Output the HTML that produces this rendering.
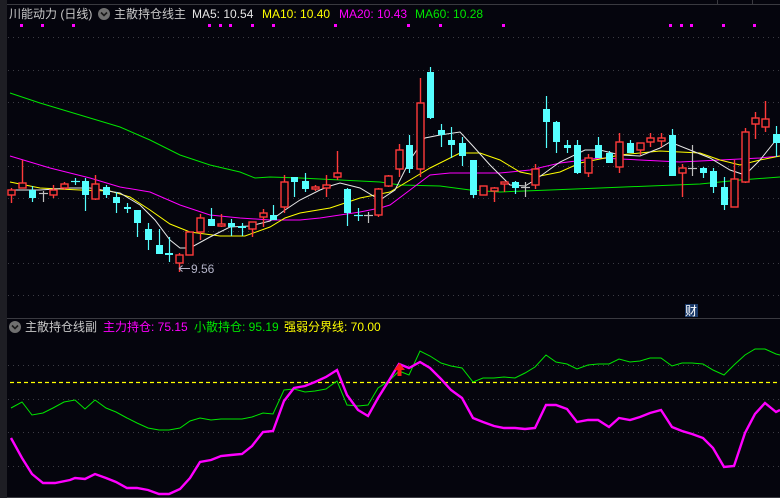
<!DOCTYPE html>
<html><head><meta charset="utf-8"><style>
html,body{margin:0;padding:0;background:#05050d;width:780px;height:498px;overflow:hidden}
svg{display:block}
text{font-family:"Liberation Sans","Noto Sans CJK SC",sans-serif;font-size:12px}
</style></head><body>
<svg width="780" height="498" viewBox="0 0 780 498" xmlns="http://www.w3.org/2000/svg">
<rect width="780" height="498" fill="#05050d"/>
<rect x="0" y="0" width="7" height="498" fill="#1e1e24"/>
<line x1="7" y1="4.5" x2="780" y2="4.5" stroke="#3a3a40"/>
<line x1="717.5" y1="0" x2="717.5" y2="4" stroke="#3a3a40"/>
<line x1="752.5" y1="0" x2="752.5" y2="4" stroke="#3a3a40"/>
<g stroke="#3c3c44" stroke-dasharray="1,4">
<line x1="8" y1="37.5" x2="780" y2="37.5"/>
<line x1="8" y1="70.5" x2="780" y2="70.5"/>
<line x1="8" y1="102.5" x2="780" y2="102.5"/>
<line x1="8" y1="134.5" x2="780" y2="134.5"/>
<line x1="8" y1="166.5" x2="780" y2="166.5"/>
<line x1="8" y1="198.5" x2="780" y2="198.5"/>
<line x1="8" y1="231.5" x2="780" y2="231.5"/>
<line x1="8" y1="263.5" x2="780" y2="263.5"/>
<line x1="8" y1="295.5" x2="780" y2="295.5"/>
<line x1="8" y1="365.5" x2="780" y2="365.5"/>
<line x1="8" y1="399.5" x2="780" y2="399.5"/>
<line x1="8" y1="432.5" x2="780" y2="432.5"/>
<line x1="8" y1="466.5" x2="780" y2="466.5"/>
</g>
<line x1="7" y1="318.5" x2="780" y2="318.5" stroke="#3a3a40"/>
<line x1="7" y1="497.5" x2="780" y2="497.5" stroke="#3a3a40"/>

<text x="9" y="18" fill="#c8c8c8">川能动力 (日线)</text>
<circle cx="104" cy="14" r="6" fill="#707070"/><path d="M101 12.5 L104 15.5 L107 12.5" stroke="#1a1a1a" stroke-width="1.6" fill="none"/>
<text x="114" y="18" fill="#c8c8c8">主散持仓线主</text>
<text x="192" y="18" fill="#e6e6e6">MA5: 10.54</text>
<text x="262" y="18" fill="#ffff00">MA10: 10.40</text>
<text x="339" y="18" fill="#ff00ff">MA20: 10.43</text>
<text x="415" y="18" fill="#00e600">MA60: 10.28</text>
<g fill="#ff00ff">
<rect x="20" y="24" width="3" height="3"/><rect x="41" y="24" width="3" height="3"/><rect x="72" y="24" width="3" height="3"/><rect x="208" y="24" width="3" height="3"/><rect x="219" y="24" width="3" height="3"/><rect x="229" y="24" width="3" height="3"/><rect x="251" y="24" width="3" height="3"/><rect x="272" y="24" width="3" height="3"/><rect x="334" y="24" width="3" height="3"/><rect x="407" y="24" width="3" height="3"/><rect x="439" y="24" width="3" height="3"/><rect x="502" y="24" width="3" height="3"/><rect x="669" y="24" width="3" height="3"/><rect x="680" y="24" width="3" height="3"/><rect x="690" y="24" width="3" height="3"/><rect x="722" y="24" width="3" height="3"/><rect x="753" y="24" width="3" height="3"/>
</g>

<polyline fill="none" stroke="#00e600" points="10,93 40,103 80,115 120,127 150,140 180,155 210,165 240,172 255,178 270,177 300,178 340,180 380,182 400,185 440,186 470,190 500,192 550,190 600,188 650,186 700,184 720,182 740,180 780,177"/>
<polyline fill="none" stroke="#ff00ff" points="10,156 50,168 90,178 120,187 150,192 180,205 210,215 240,218 270,220 300,220 320,218 340,215 360,212 380,208 390,205 410,190 430,175 450,173 470,173 500,173 530,170 560,163 600,158 640,160 680,162 720,160 760,158 780,156"/>
<polyline fill="none" stroke="#ffff00" points="10,182 40,188 80,190 110,191 130,197 150,210 170,224 190,232 220,236 245,236 270,227 285,218 300,213 330,208 360,198 390,192 410,180 430,168 460,153 480,153 500,160 520,172 540,176 560,172 580,163 620,155 660,151 700,153 720,160 740,165 760,160 780,156"/>
<polyline fill="none" stroke="#e8e8e8" points="10,190 40,190 70,188 90,188 120,193 140,205 155,220 170,240 180,248 190,248 210,237 230,227 250,226 270,221 285,210 300,200 320,190 330,186 340,183 360,188 380,200 395,190 410,160 425,138 440,135 460,132 472,145 490,165 510,185 525,186 535,180 560,162 585,150 600,150 620,155 640,156 660,148 670,142 690,150 710,158 730,170 745,175 760,160 780,135"/>

<g stroke="#ff3a3a" fill="none" stroke-width="1.4">
<line x1="11.5" y1="188" x2="11.5" y2="203"/><rect x="8" y="190" width="7" height="5" fill="#05050d"/>
<line x1="22.5" y1="160" x2="22.5" y2="188"/><rect x="19" y="183" width="7" height="5" fill="#05050d"/>
<line x1="53.5" y1="185" x2="53.5" y2="198"/><rect x="50" y="190" width="7" height="5" fill="#05050d"/>
<line x1="64.5" y1="182" x2="64.5" y2="190"/><rect x="61" y="184" width="7" height="4" fill="#05050d"/>
<line x1="95.5" y1="175" x2="95.5" y2="200"/><rect x="92" y="184" width="7" height="15" fill="#05050d"/>
<line x1="179.5" y1="253" x2="179.5" y2="272"/><rect x="176" y="255" width="7" height="8" fill="#05050d"/>
<rect x="186" y="232" width="7" height="23" fill="#05050d"/>
<line x1="200.5" y1="214" x2="200.5" y2="240"/><rect x="197" y="218" width="7" height="14" fill="#05050d"/>
<line x1="221.5" y1="214" x2="221.5" y2="227"/><rect x="218" y="224" width="7" height="2" fill="#05050d"/>
<line x1="252.5" y1="222" x2="252.5" y2="237"/><rect x="249" y="222" width="7" height="7" fill="#05050d"/>
<line x1="263.5" y1="209" x2="263.5" y2="227"/><rect x="260" y="213" width="7" height="4" fill="#05050d"/>
<line x1="284.5" y1="175" x2="284.5" y2="213"/><rect x="281" y="182" width="7" height="25" fill="#05050d"/>
<line x1="315.5" y1="185" x2="315.5" y2="191"/><rect x="312" y="187" width="7" height="2" fill="#05050d"/>
<line x1="326.5" y1="175" x2="326.5" y2="197"/><rect x="323" y="185" width="7" height="3" fill="#05050d"/>
<line x1="337.5" y1="151" x2="337.5" y2="180"/><rect x="334" y="173" width="7" height="4" fill="#05050d"/>
<line x1="378.5" y1="188" x2="378.5" y2="217"/><rect x="375" y="189" width="7" height="26" fill="#05050d"/>
<line x1="388.5" y1="175" x2="388.5" y2="187"/><rect x="385" y="176" width="7" height="10" fill="#05050d"/>
<line x1="399.5" y1="144" x2="399.5" y2="177"/><rect x="396" y="150" width="7" height="19" fill="#05050d"/>
<line x1="420.5" y1="78" x2="420.5" y2="177"/><rect x="417" y="103" width="7" height="66" fill="#05050d"/>
<rect x="480" y="186" width="7" height="9" fill="#05050d"/>
<line x1="494.5" y1="187" x2="494.5" y2="202"/><rect x="491" y="188" width="7" height="3" fill="#05050d"/>
<line x1="504.5" y1="182" x2="504.5" y2="192"/><rect x="501" y="182" width="7" height="2" fill="#05050d"/>
<line x1="535.5" y1="164" x2="535.5" y2="189"/><rect x="532" y="169" width="7" height="16" fill="#05050d"/>
<line x1="588.5" y1="154" x2="588.5" y2="177"/><rect x="585" y="158" width="7" height="15" fill="#05050d"/>
<line x1="619.5" y1="133" x2="619.5" y2="173"/><rect x="616" y="142" width="7" height="25" fill="#05050d"/>
<line x1="640.5" y1="143" x2="640.5" y2="155"/><rect x="637" y="143" width="7" height="7" fill="#05050d"/>
<line x1="650.5" y1="133" x2="650.5" y2="147"/><rect x="647" y="138" width="7" height="4" fill="#05050d"/>
<line x1="661.5" y1="133" x2="661.5" y2="147"/><rect x="658" y="138" width="7" height="3" fill="#05050d"/>
<line x1="682.5" y1="164" x2="682.5" y2="197"/><rect x="679" y="168" width="7" height="5" fill="#05050d"/>
<line x1="734.5" y1="160" x2="734.5" y2="207"/><rect x="731" y="179" width="7" height="28" fill="#05050d"/>
<line x1="745.5" y1="128" x2="745.5" y2="183"/><rect x="742" y="132" width="7" height="50" fill="#05050d"/>
<line x1="755.5" y1="112" x2="755.5" y2="139"/><rect x="752" y="118" width="7" height="6" fill="#05050d"/>
<line x1="765.5" y1="101" x2="765.5" y2="132"/><rect x="762" y="119" width="7" height="8" fill="#05050d"/>
</g>
<g stroke="#55ffff" fill="#55ffff" stroke-width="1.2">
<line x1="32.5" y1="186" x2="32.5" y2="202"/><rect x="29" y="190" width="7" height="8" stroke="none"/>
<line x1="75.5" y1="178" x2="75.5" y2="185"/><line x1="71" y1="181.5" x2="80" y2="181.5"/>
<line x1="85.5" y1="178" x2="85.5" y2="211"/><rect x="82" y="181" width="7" height="14" stroke="none"/>
<line x1="106.5" y1="185" x2="106.5" y2="198"/><rect x="103" y="187" width="7" height="8" stroke="none"/>
<line x1="116.5" y1="192" x2="116.5" y2="213"/><rect x="113" y="197" width="7" height="6" stroke="none"/>
<line x1="127.5" y1="203" x2="127.5" y2="213"/><rect x="124" y="207" width="7" height="2" stroke="none"/>
<line x1="137.5" y1="210" x2="137.5" y2="237"/><rect x="134" y="210" width="7" height="13" stroke="none"/>
<line x1="148.5" y1="223" x2="148.5" y2="250"/><rect x="145" y="229" width="7" height="11" stroke="none"/>
<line x1="159.5" y1="229" x2="159.5" y2="254"/><rect x="156" y="245" width="7" height="9" stroke="none"/>
<line x1="169.5" y1="237" x2="169.5" y2="262"/><rect x="165" y="253" width="8" height="2" stroke="none"/>
<line x1="211.5" y1="208" x2="211.5" y2="226"/><rect x="208" y="219" width="7" height="7" stroke="none"/>
<line x1="231.5" y1="219" x2="231.5" y2="236"/><rect x="228" y="223" width="7" height="4" stroke="none"/>
<line x1="242.5" y1="223" x2="242.5" y2="236"/><rect x="238" y="226" width="8" height="2" stroke="none"/>
<line x1="273.5" y1="205" x2="273.5" y2="220"/><rect x="270" y="215" width="7" height="5" stroke="none"/>
<line x1="294.5" y1="177" x2="294.5" y2="197"/><rect x="291" y="177" width="7" height="5" stroke="none"/>
<line x1="305.5" y1="173" x2="305.5" y2="192"/><rect x="302" y="181" width="7" height="8" stroke="none"/>
<line x1="347.5" y1="188" x2="347.5" y2="226"/><rect x="344" y="189" width="7" height="24" stroke="none"/>
<line x1="358.5" y1="208" x2="358.5" y2="221"/><line x1="354" y1="215.5" x2="363" y2="215.5"/>
<line x1="409.5" y1="135" x2="409.5" y2="173"/><rect x="406" y="145" width="7" height="24" stroke="none"/>
<line x1="430.5" y1="67" x2="430.5" y2="119"/><rect x="427" y="72" width="7" height="46" stroke="none"/>
<line x1="441.5" y1="124" x2="441.5" y2="147"/><rect x="438" y="130" width="7" height="5" stroke="none"/>
<line x1="451.5" y1="127" x2="451.5" y2="158"/><rect x="448" y="140" width="7" height="5" stroke="none"/>
<line x1="462.5" y1="137" x2="462.5" y2="166"/><rect x="459" y="143" width="7" height="13" stroke="none"/>
<line x1="473.5" y1="160" x2="473.5" y2="198"/><rect x="470" y="160" width="7" height="35" stroke="none"/>
<line x1="515.5" y1="181" x2="515.5" y2="194"/><rect x="512" y="182" width="7" height="6" stroke="none"/>
<line x1="546.5" y1="96" x2="546.5" y2="148"/><rect x="543" y="109" width="7" height="13" stroke="none"/>
<line x1="556.5" y1="121" x2="556.5" y2="153"/><rect x="553" y="122" width="7" height="20" stroke="none"/>
<line x1="567.5" y1="140" x2="567.5" y2="153"/><rect x="564" y="145" width="7" height="3" stroke="none"/>
<line x1="577.5" y1="140" x2="577.5" y2="174"/><rect x="574" y="145" width="7" height="28" stroke="none"/>
<line x1="598.5" y1="137" x2="598.5" y2="158"/><rect x="595" y="145" width="7" height="13" stroke="none"/>
<line x1="609.5" y1="151" x2="609.5" y2="163"/><rect x="606" y="153" width="7" height="10" stroke="none"/>
<line x1="630.5" y1="140" x2="630.5" y2="153"/><rect x="627" y="143" width="7" height="10" stroke="none"/>
<line x1="672.5" y1="129" x2="672.5" y2="176"/><rect x="669" y="135" width="7" height="41" stroke="none"/>
<line x1="703.5" y1="167" x2="703.5" y2="178"/><rect x="700" y="168" width="7" height="5" stroke="none"/>
<line x1="713.5" y1="168" x2="713.5" y2="193"/><rect x="710" y="171" width="7" height="16" stroke="none"/>
<line x1="724.5" y1="177" x2="724.5" y2="210"/><rect x="721" y="187" width="7" height="18" stroke="none"/>
<line x1="776.5" y1="126" x2="776.5" y2="157"/><rect x="773" y="134" width="7" height="9" stroke="none"/>
</g>
<g stroke="#c0c0c0" stroke-width="1.2">
<line x1="43.5" y1="191" x2="43.5" y2="202"/><line x1="39" y1="193.5" x2="48" y2="193.5"/>
<line x1="368.5" y1="212" x2="368.5" y2="223"/><line x1="364" y1="215.5" x2="373" y2="215.5"/>
<line x1="525.5" y1="182" x2="525.5" y2="197"/><line x1="521" y1="187.5" x2="530" y2="187.5"/>
<line x1="692.5" y1="145" x2="692.5" y2="176"/><line x1="688" y1="168.5" x2="697" y2="168.5"/>
</g>
<path d="M179 268.5 H190 M179 268.5 L182.5 265.5 M179 268.5 L182.5 271.5" stroke="#b4b4c8" stroke-width="1.1" fill="none"/>
<text x="191" y="273" fill="#b4b4c8" font-size="13">9.56</text>
<rect x="685" y="304" width="13" height="13" fill="#1a3a6a"/>
<text x="685" y="315" fill="#ffffff" font-size="12">财</text>

<circle cx="15" cy="327" r="6" fill="#707070"/><path d="M12 325.5 L15 328.5 L18 325.5" stroke="#1a1a1a" stroke-width="1.6" fill="none"/>
<text x="25" y="331" fill="#c8c8c8">主散持仓线副</text>
<text x="103" y="331" fill="#ff00ff">主力持仓: 75.15</text>
<text x="194" y="331" fill="#00e600">小散持仓: 95.19</text>
<text x="284" y="331" fill="#ffff00">强弱分界线: 70.00</text>

<line x1="10" y1="382.5" x2="780" y2="382.5" stroke="#ffff00" stroke-width="1.2" stroke-dasharray="4,3"/>
<polyline fill="none" stroke="#00e600" points="11,408 22,402 32,415 43,413 53,408 64,402 75,400 85,409 95,400 106,408 116,412 127,418 137,423 148,428 159,430 169,430 180,428 190,421 200,418 211,420 221,419 242,419 252,417 263,413 273,414 284,390 294,389 305,392 315,391 326,389 337,381 347,405 358,406 368,405 378,388 390,380 399,371 409,375 420,351 430,356 441,363 451,366 462,368 473,382 483,378 494,378 504,377 515,378 525,373 535,367 546,355 556,362 567,364 577,369 588,365 598,364 609,364 619,359 630,362 640,361 650,358 661,358 672,366 682,363 692,363 703,364 713,370 724,375 734,365 745,355 755,349 765,349 776,354 780,355"/>
<polyline fill="none" stroke="#ff00ff" stroke-width="2.4" points="11,438 22,458 32,474 43,483 55,483 70,480 75,478 85,479 95,474 106,478 116,482 127,488 137,488 148,490 159,494 169,494 180,489 190,478 200,462 211,460 221,456 231,455 242,454 252,446 263,432 273,431 284,401 294,388 305,386 315,382 326,377 337,370 347,395 358,410 368,416 378,398 388,382 399,364 409,368 420,362 430,368 441,379 451,390 462,398 473,418 483,422 494,426 504,428 515,428 525,429 535,428 546,405 556,405 567,409 577,422 588,420 598,420 609,427 619,418 630,420 640,417 650,413 661,410 672,427 682,431 692,434 703,438 713,448 724,467 734,466 745,433 755,414 765,403 776,412 780,410"/>
<path d="M399.5 363 L405 370 L401.5 370 L401.5 376 L397.5 376 L397.5 370 L394 370 Z" fill="#ff1a1a"/>
</svg>
</body></html>
